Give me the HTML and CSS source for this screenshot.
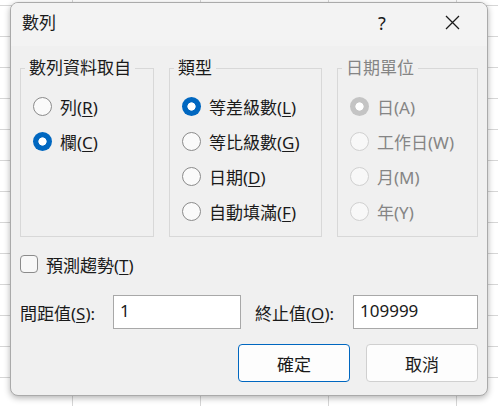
FILE: index.html
```html
<!DOCTYPE html>
<html lang="zh-Hant">
<head>
<meta charset="utf-8">
<title>數列</title>
<link rel="stylesheet" href="styles.css">
</head>
<body>
<div class="dialog">
  <div class="titlebar">
    <span class="title">數列</span>
    <span class="cap-btn help">?</span>
    <span class="cap-btn close">
      <svg width="15" height="15" viewBox="0 0 15 15"><path d="M1 1 L14 14 M14 1 L1 14" stroke="#1a1a1a" stroke-width="1.25" fill="none"/></svg>
    </span>
  </div>
  <div class="body">
    <div class="groups">
      <fieldset class="group">
        <legend>數列資料取自</legend>
        <div class="opt"><span class="radio"></span><span>列(<u>R</u>)</span></div>
        <div class="opt"><span class="radio on"></span><span>欄(<u>C</u>)</span></div>
      </fieldset>
      <fieldset class="group">
        <legend>類型</legend>
        <div class="opt"><span class="radio on"></span><span>等差級數(<u>L</u>)</span></div>
        <div class="opt"><span class="radio"></span><span>等比級數(<u>G</u>)</span></div>
        <div class="opt"><span class="radio"></span><span>日期(<u>D</u>)</span></div>
        <div class="opt"><span class="radio"></span><span>自動填滿(<u>F</u>)</span></div>
      </fieldset>
      <fieldset class="group disabled">
        <legend>日期單位</legend>
        <div class="opt"><span class="radio on"></span><span>日(A)</span></div>
        <div class="opt"><span class="radio"></span><span>工作日(W)</span></div>
        <div class="opt"><span class="radio"></span><span>月(M)</span></div>
        <div class="opt"><span class="radio"></span><span>年(Y)</span></div>
      </fieldset>
    </div>
    <div class="check-row"><span class="checkbox"></span><span>預測趨勢(<u>T</u>)</span></div>
    <div class="fields">
      <span class="label label-step">間距值(<u>S</u>):</span>
      <div class="field field-step">1</div>
      <span class="label label-stop">終止值(<u>O</u>):</span>
      <div class="field field-stop">109999</div>
    </div>
    <div class="buttons">
      <div class="btn primary">確定</div>
      <div class="btn">取消</div>
    </div>
  </div>
</div>
</body>
</html>
```
FILE: styles.css
```css
html, body {
  margin: 0;
}
body {
  width: 498px;
  height: 406px;
  box-sizing: border-box;
  padding: 2px 0 0 10px;
  overflow: hidden;
  background-color: #ffffff;
  background-image:
    linear-gradient(to right, #d6d6d6 1px, transparent 1px),
    linear-gradient(to bottom, #d6d6d6 1px, transparent 1px);
  background-size: 128px 100%, 100% 31px;
  background-position: 72px 0, 0 5px;
  font-family: "Noto Sans", "Noto Sans CJK TC", sans-serif;
}
.dialog {
  width: 478px;
  height: 394px;
  box-sizing: border-box;
  border: 1px solid #aaaaaa;
  border-radius: 8px;
  background: #f0f0f0;
  box-shadow: 0 2px 6px rgba(0, 0, 0, 0.3);
  overflow: hidden;
  display: flex;
  flex-direction: column;
  color: #1a1a1a;
  font-size: 17px;
}
.titlebar {
  height: 43px;
  box-sizing: border-box;
  padding: 0 0 4px 11px;
  display: flex;
  align-items: center;
  background: #f3f3f3;
}
.title {
  flex: 1;
  line-height: 24px;
}
.cap-btn {
  width: 70px;
  height: 39px;
  display: flex;
  align-items: center;
  justify-content: center;
}
.help {
  font-size: 18px;
}
.body {
  flex: 1;
  padding: 12px 9px 0 9px;
}
.groups {
  display: grid;
  grid-template-columns: 134px 153px 141px;
  column-gap: 15px;
}
.group {
  margin: 0;
  padding: 11px 0 0 12px;
  border: 1px solid #d8d8d8;
  height: 179px;
  box-sizing: border-box;
  min-width: 0;
}
.group legend {
  padding: 0 4px;
  margin-left: -8px;
  line-height: 20px;
}
.opt {
  display: flex;
  align-items: center;
  height: 35px;
  gap: 8px;
  white-space: nowrap;
}
.radio {
  flex: none;
  width: 19px;
  height: 19px;
  box-sizing: border-box;
  border-radius: 50%;
  border: 1px solid #8b8b8b;
  background: #fafafa;
}
.radio.on {
  border: none;
  background: radial-gradient(circle, #ffffff 0 3.8px, #0067c0 4.4px);
}
.disabled {
  color: #858585;
}
.disabled .radio {
  border-color: #d0d0d0;
  background: #f8f8f8;
}
.disabled .radio.on {
  border: none;
  background: radial-gradient(circle, #ffffff 0 3.8px, #c4c4c4 4.4px);
}
u {
  text-underline-offset: 2px;
}
.check-row {
  margin-top: 17px;
  height: 20px;
  display: flex;
  align-items: center;
  gap: 8px;
}
.checkbox {
  flex: none;
  width: 18px;
  height: 18px;
  box-sizing: border-box;
  border: 1px solid #8b8b8b;
  border-radius: 4px;
  background: #f8f8f8;
}
.fields {
  margin-top: 21px;
  height: 34px;
  display: flex;
  align-items: center;
}
.label {
  white-space: nowrap;
}
.label-step {
  width: 93px;
}
.label-stop {
  width: 98px;
  margin-left: 14px;
}
.field {
  height: 34px;
  box-sizing: border-box;
  border: 1px solid #a8a8a8;
  background: #ffffff;
  padding: 4px 0 0 6px;
  line-height: 22px;
}
.field-step {
  width: 128px;
}
.field-stop {
  width: 125px;
}
.buttons {
  margin-top: 15px;
  display: flex;
  justify-content: flex-end;
  gap: 16px;
}
.btn {
  width: 112px;
  height: 38px;
  box-sizing: border-box;
  border: 1px solid #d0d0d0;
  border-radius: 4px;
  background: #fdfdfd;
  display: flex;
  align-items: center;
  justify-content: center;
}
.btn.primary {
  border-color: #0067c0;
}
```
